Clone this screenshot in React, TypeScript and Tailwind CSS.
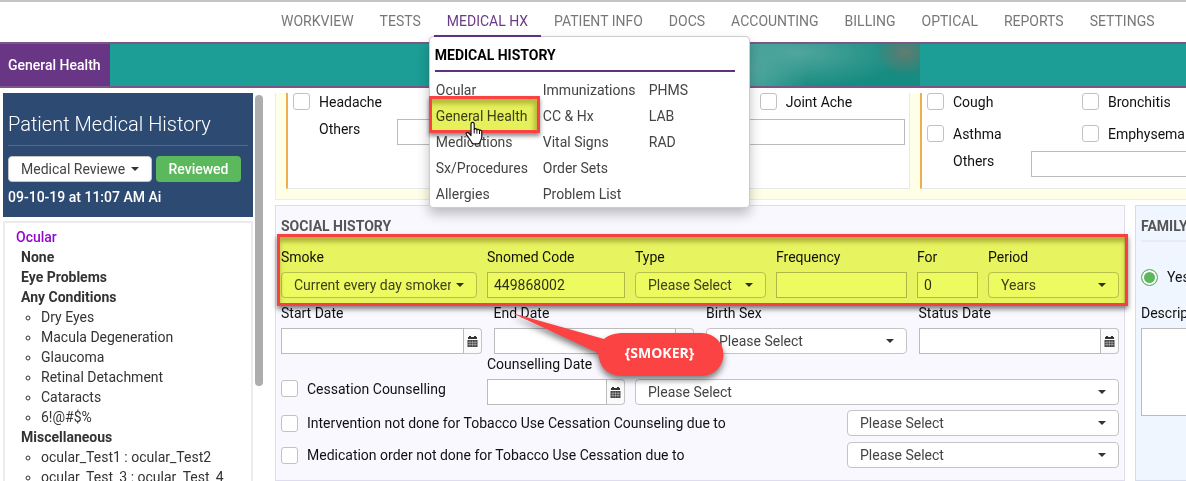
import React, { useId } from "react";

const navItems = [
  "WORKVIEW",
  "TESTS",
  "MEDICAL HX",
  "PATIENT INFO",
  "DOCS",
  "ACCOUNTING",
  "BILLING",
  "OPTICAL",
  "REPORTS",
  "SETTINGS",
];

const menuColumns = [
  ["Ocular", "General Health", "Medications", "Sx/Procedures", "Allergies"],
  ["Immunizations", "CC & Hx", "Vital Signs", "Order Sets", "Problem List"],
  ["PHMS", "LAB", "RAD"],
];

const conditions = [
  "Dry Eyes",
  "Macula Degeneration",
  "Glaucoma",
  "Retinal Detachment",
  "Cataracts",
  "6!@#$%",
];

const boxClass =
  "block h-[26px] w-full min-w-0 border border-[#bbb] bg-white px-1.5 text-sm text-[#333] outline-none";

function Caret() {
  return (
    <svg
      className="pointer-events-none absolute top-[11px] right-[13px] h-1 w-2"
      viewBox="0 0 8 4"
      aria-hidden="true"
    >
      <path d="M0 0h8L4 4z" fill="#333" />
    </svg>
  );
}

function Select({ id, label, value }: { id?: string; label?: string; value: string }) {
  return (
    <div className="relative">
      <select
        id={id}
        aria-label={label}
        className="block h-[26px] w-full appearance-none rounded border border-[#c4c4c4] bg-white pr-[25px] pl-3 text-sm leading-5 text-[#444] outline-none"
      >
        <option>{value}</option>
      </select>
      <Caret />
    </div>
  );
}

function CalendarIcon() {
  return (
    <svg className="h-[11px] w-[11px]" viewBox="0 0 11 11" aria-hidden="true">
      <path d="M2 0h2v1h3V0h2v1h1v2H1V1h1z" fill="#333" />
      <path d="M0.500 4h10v7h-10z" fill="#444" />
      <path
        d="M1 6.300h9M1 8.600h9M3 4.500v6M5.500 4.500v6M8 4.500v6"
        stroke="#ccc"
        strokeWidth="0.5"
        fill="none"
      />
    </svg>
  );
}

function Field({ label, children }: { label: string; children: (id: string) => React.ReactNode }) {
  const id = useId();
  return (
    <div className="min-w-0">
      <label htmlFor={id} className="mb-[5px] block h-5 leading-5 whitespace-nowrap text-[#111]">
        {label}
      </label>
      {children(id)}
    </div>
  );
}

function DateBox({ id }: { id: string }) {
  return (
    <div className="flex">
      <input id={id} type="text" className={boxClass} />
      <button
        type="button"
        aria-label="Open calendar"
        className="flex h-[26px] w-[18px] shrink-0 items-center justify-center rounded-r border border-l-0 border-[#c4c4c4] bg-[#fafafa]"
      >
        <CalendarIcon />
      </button>
    </div>
  );
}

function Check({ label }: { label: string }) {
  return (
    <label className="flex h-[17px] items-center gap-[9px] whitespace-nowrap text-[#111]">
      <input
        type="checkbox"
        className="size-[17px] shrink-0 appearance-none rounded-[3px] border border-[#c2c2c2] bg-white"
      />
      {label}
    </label>
  );
}

function HandCursor() {
  return (
    <svg
      className="pointer-events-none absolute top-[18px] left-[29px] z-10 h-6 w-[18px]"
      viewBox="0 0 18 24"
      aria-hidden="true"
    >
      <path
        d="M6 14.5V3a1.6 1.6 0 0 1 3.2 0v5.6c.2-1.4 2.6-1.2 2.7.3.5-1 2.400-.8 2.600.6.8-.6 2.300-.2 2.300 1.200v5.200c0 2-1.200 3.100-1.600 4.600-.2 1.600-1 2.300-2.400 2.300H8.600c-1 0-1.800-.6-2.200-1.800-.8-2-3-4.200-5-7.400-.9-1.600 1-2.900 2.300-1.600z"
        fill="#fff"
        stroke="#111"
        strokeWidth="1.2"
        strokeLinejoin="round"
      />
      <path d="M9.2 8.5v4M11.9 9.2v3.5M14.500 10v3" stroke="#111" strokeWidth="1" />
    </svg>
  );
}

function MedicalMenu() {
  return (
    <div className="absolute top-[36px] -left-[5px] z-20 h-[172px] w-[321px] rounded border border-[#ccc] bg-white pt-2 pr-[14px] pl-[5px] shadow-[0_6px_12px_rgba(0,0,0,0.25)]">
      <h2 className="border-b-2 border-[#5f3379] pb-[5px] font-bold leading-5 text-black">
        MEDICAL HISTORY
      </h2>
      <div className="grid grid-cols-[107px_106px_1fr] pt-[5px] pl-px">
        {menuColumns.map((column) => (
          <ul key={column[0]}>
            {column.map((item) => (
              <li key={item} className="relative h-[26px] leading-[26px] whitespace-nowrap">
                <a href="#" className="text-[#444]">
                  {item}
                </a>
                {item === "General Health" && (
                  <>
                    <span className="pointer-events-none absolute -top-[7px] right-[3px] -bottom-[4px] -left-[7px] bg-[#e6f05a] mix-blend-multiply" />
                    <span className="pointer-events-none absolute -top-[7px] right-[3px] -bottom-[4px] -left-[7px] border-[3px] border-[#f94343] shadow-[0_3px_4px_rgba(0,0,0,0.45),inset_-3px_5px_4px_rgba(90,90,0,0.35)]" />
                    <HandCursor />
                  </>
                )}
              </li>
            ))}
          </ul>
        ))}
      </div>
    </div>
  );
}

function TopNav() {
  return (
    <nav className="flex h-[42px] shrink-0 border-t-2 border-[#c4c4c4] pl-[268px]">
      {navItems.map((item) => {
        const active = item === "MEDICAL HX";
        return (
          <div key={item} className="relative -mt-0.5 h-[37px]">
            <a
              href="#"
              className={
                active
                  ? "relative z-30 block h-full border-b-2 border-[#5f2f80] px-[13px] pt-[11px] leading-5 whitespace-nowrap text-[#6b3a84]"
                  : "block h-full px-[13px] pt-[11px] leading-5 whitespace-nowrap text-[#777]"
              }
            >
              {item}
            </a>
            {active && <MedicalMenu />}
          </div>
        );
      })}
    </nav>
  );
}

function Sidebar() {
  return (
    <aside className="flex w-[265px] shrink-0 gap-[2px] pl-[3px]">
      <div className="flex w-[250px] flex-col">
        <div className="h-[124px] shrink-0 bg-[#2d4a73] px-[5px] pt-[17px] text-white">
          <h1 className="border-b border-[#4e6a91] pb-[7px] text-xl leading-7 font-light">
            Patient Medical History
          </h1>
          <div className="mt-[10px] flex gap-1">
            <div className="w-36">
              <Select label="Review list" value="Medical Reviewed" />
            </div>
            <button
              type="button"
              className="h-[26px] w-[85px] rounded bg-[#5cb85c] font-medium text-white"
            >
              Reviewed
            </button>
          </div>
          <p className="mt-[5px] leading-5 font-medium">09-10-19 at 11:07 AM Ai</p>
        </div>
        <div className="mt-1 min-h-0 flex-1 overflow-hidden border-2 border-b-0 border-[#ececec] pt-1 pl-[11px] leading-5 text-[#333]">
          <h2 className="font-medium text-[#9406cf]">Ocular</h2>
          <div className="pl-[5px]">
            <h3 className="font-bold">None</h3>
            <h3 className="font-bold">Eye Problems</h3>
            <h3 className="font-bold">Any Conditions</h3>
            <ul className="list-[circle] pl-5">
              {conditions.map((item) => (
                <li key={item}>{item}</li>
              ))}
            </ul>
            <h3 className="font-bold">Miscellaneous</h3>
            <ul className="list-[circle] pl-5">
              <li>ocular_Test1 : ocular_Test2</li>
              <li>ocular_Test_3 : ocular_Test_4</li>
            </ul>
          </div>
        </div>
      </div>
      <div className="mt-0.5 h-3/4 w-2 rounded-full bg-[#adadad]" />
    </aside>
  );
}

function OthersRow({ inputClass }: { inputClass: string }) {
  const id = useId();
  return (
    <div className="mt-[9px] flex pl-[26px]">
      <label htmlFor={id} className="w-[78px] shrink-0 leading-5 text-[#111]">
        Others
      </label>
      <input id={id} type="text" className={inputClass} />
    </div>
  );
}

function SymptomCards() {
  return (
    <section className="grid grid-cols-[624fr_266fr] gap-[10px] border-b border-l border-[#f4f0c4] bg-[#fffee6] pb-[10px] pl-[10px]">
      <div className="min-w-0 border-r border-b border-l-2 border-[#e8e8e8] border-l-[#f0ad4e] bg-white pr-1 pl-[5px]">
        <div className="grid grid-cols-[466fr_145fr]">
          <Check label="Headache" />
          <Check label="Joint Ache" />
        </div>
        <OthersRow inputClass="h-[26px] min-w-0 flex-1 border border-[#bbb]" />
      </div>
      <div className="min-w-0 overflow-hidden border-b border-l-2 border-[#e8e8e8] border-l-[#f0ad4e] bg-white pb-[11px] pl-[5px]">
        <div className="grid grid-cols-[155fr_104fr] gap-y-[15px]">
          <Check label="Cough" />
          <Check label="Bronchitis" />
          <Check label="Asthma" />
          <Check label="Emphysema" />
        </div>
        <OthersRow inputClass="h-[26px] min-w-0 flex-1 border border-r-0 border-[#bbb]" />
      </div>
    </section>
  );
}

function Callout() {
  return (
    <div className="pointer-events-none absolute top-[102px] left-[230px] z-10 h-[70px] w-[220px]">
      <svg
        className="h-full w-full overflow-visible drop-shadow-[0_4px_3px_rgba(0,0,0,0.5)]"
        viewBox="0 0 220 70"
        aria-hidden="true"
      >
        <path
          d="M6 5 98 31Q103 26 115 25H196A21.500 21.500 0 0 1 196 68H114Q94 66 92 45Z"
          fill="#fc4343"
        />
      </svg>
      <span className="absolute top-[35px] right-1 w-[125px] text-center font-['Open_Sans',sans-serif] text-sm leading-5 font-bold text-white">
        {"{SMOKER}"}
      </span>
    </div>
  );
}

function SocialHistory() {
  return (
    <section className="relative min-w-0 flex-1 border border-[#dedcee] bg-[#faf8ff] px-[5px] pt-[10px] pb-3">
      <h2 className="leading-5 font-bold text-[#555]">SOCIAL HISTORY</h2>
      <div className="relative mt-[11px] grid grid-cols-[196fr_138fr_131fr_131fr_61fr_131fr] gap-[10px]">
        <Field label="Smoke">{(id) => <Select id={id} value="Current every day smoker" />}</Field>
        <Field label="Snomed Code">
          {(id) => <input id={id} type="text" defaultValue="449868002" className={boxClass} />}
        </Field>
        <Field label="Type">{(id) => <Select id={id} value="Please Select" />}</Field>
        <Field label="Frequency">{(id) => <input id={id} type="text" className={boxClass} />}</Field>
        <Field label="For">
          {(id) => <input id={id} type="text" defaultValue="0" className={boxClass} />}
        </Field>
        <Field label="Period">{(id) => <Select id={id} value="Years" />}</Field>
        <div className="pointer-events-none absolute -top-[13px] -right-[9px] -bottom-[8px] -left-[4px] bg-[#edfa60] mix-blend-multiply" />
        <div className="pointer-events-none absolute -top-[13px] -right-[9px] -bottom-[8px] -left-[4px] border-[3px] border-[#f94040] shadow-[0_3px_5px_rgba(0,0,0,0.5),inset_0_5px_4px_rgba(90,90,0,0.4)]" />
      </div>
      <div className="mt-[5px] grid grid-cols-4 gap-3">
        <Field label="Start Date">{(id) => <DateBox id={id} />}</Field>
        <Field label="End Date">{(id) => <DateBox id={id} />}</Field>
        <Field label="Birth Sex">{(id) => <Select id={id} value="Please Select" />}</Field>
        <Field label="Status Date">{(id) => <DateBox id={id} />}</Field>
      </div>
      <div className="grid grid-cols-[196fr_138fr_484fr] gap-[10px]">
        <div className="pt-[26px]">
          <Check label="Cessation Counselling" />
        </div>
        <Field label="Counselling Date">{(id) => <DateBox id={id} />}</Field>
        <div className="self-end">
          <Select label="Counselling type" value="Please Select" />
        </div>
      </div>
      <div className="mt-[5px] grid grid-cols-[556fr_272fr] items-center gap-x-[10px] gap-y-[6px]">
        <Check label="Intervention not done for Tobacco Use Cessation Counseling due to" />
        <Select label="Intervention reason" value="Please Select" />
        <Check label="Medication order not done for Tobacco Use Cessation due to" />
        <Select label="Medication reason" value="Please Select" />
      </div>
      <Callout />
    </section>
  );
}

function FamilyHistory() {
  return (
    <section className="w-[51px] shrink-0 overflow-hidden border border-r-0 border-[#d5dcee] bg-[#f0f6ff] pt-[10px] pl-[5px] whitespace-nowrap">
      <h2 className="border-b-2 border-[#e9edf3] pb-[4px] leading-5 font-bold text-[#555]">FAMILY</h2>
      <label className="mt-[25px] flex h-5 items-center gap-[9px] text-[#111]">
        <input
          type="radio"
          name="family"
          defaultChecked
          className="size-[17px] shrink-0 appearance-none rounded-full border border-[#5cb85c] bg-[#5cb85c] shadow-[inset_0_0_0_2px_#fff]"
        />
        Yes
      </label>
      <label htmlFor="family-description" className="mt-4 mb-[5px] block leading-5 text-[#111]">
        Description
      </label>
      <textarea
        id="family-description"
        className="block h-[88px] w-[200px] resize-none border border-[#bbb] bg-white"
      />
    </section>
  );
}

export default function App() {
  return (
    <div className="flex h-screen flex-col overflow-hidden bg-white font-[Roboto,sans-serif] text-sm">
      <TopNav />
      <div className="flex h-[46px] shrink-0 border-y-2 border-[#7d5689] bg-[#1c9d95]">
        <a
          href="#"
          className="flex w-[110px] shrink-0 items-center bg-[#693685] pl-2 font-medium whitespace-nowrap text-white"
        >
          General Health
        </a>
        <div className="mr-[266px] ml-auto w-[491px] bg-[radial-gradient(ellipse_30px_24px_at_97%_20%,#647b70,transparent),radial-gradient(ellipse_110px_36px_at_75%_20%,#50a69e,transparent),radial-gradient(ellipse_60px_70px_at_65%_60%,#54a9a0,transparent)] bg-[#168b80]" />
      </div>
      <div className="flex min-h-0 flex-1 pt-[5px]">
        <Sidebar />
        <main className="min-w-0 flex-1 pl-[10px]">
          <SymptomCards />
          <div className="mt-[5px] flex gap-[10px]">
            <SocialHistory />
            <FamilyHistory />
          </div>
        </main>
      </div>
    </div>
  );
}
